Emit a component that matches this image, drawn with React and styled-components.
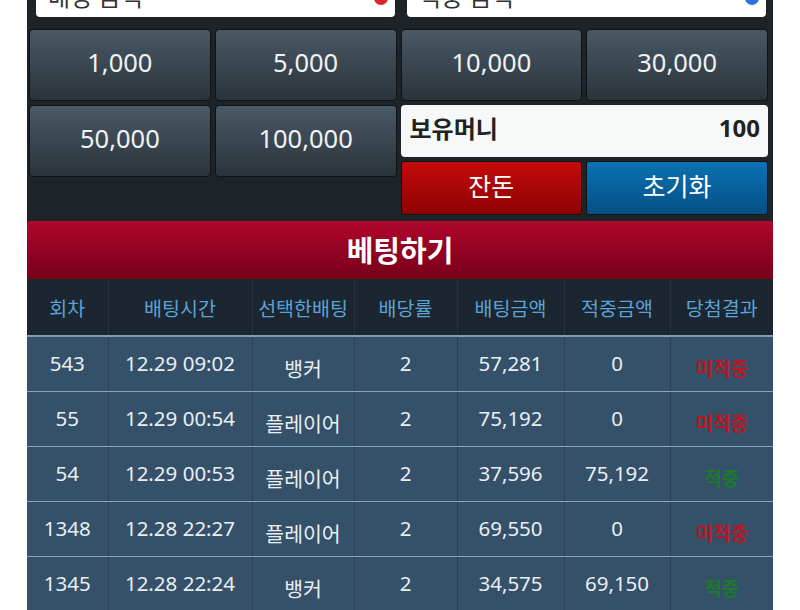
import React from 'react'
import styled, { createGlobalStyle } from 'styled-components'

const GlobalStyle = createGlobalStyle`
    html, body {
        margin: 0;
        padding: 0;
        background: #ffffff;
        overflow: hidden;
    }
    body {
        font-family: "Noto Sans", "Noto Sans CJK KR", sans-serif;
    }
`

const Panel = styled.div`
    width: 746px;
    margin-left: 27px;
    background-color: #1d2327;
`

const InputRow = styled.div`
    display: grid;
    grid-template-columns: 1fr 1fr;
    column-gap: 12px;
    padding: 0 7px 0 9px;
    margin-top: -27px;
`

const InputBox = styled.div`
    position: relative;
    height: 44px;
    background-color: #ffffff;
    border-radius: 4px;
    display: flex;
    align-items: center;
    padding-left: 12px;
    font-size: 24px;
    color: #333;
`

const Dot = styled.span`
    position: absolute;
    right: 7px;
    top: 18px;
    width: 14px;
    height: 14px;
    border-radius: 50%;
    background-color: ${p => p.$color};
`

const Grid = styled.div`
    display: grid;
    grid-template-columns: repeat(4, 1fr);
    gap: 4px;
    padding: 12px 5px 6px 2px;
`

const AmountButton = styled.div`
    height: 72px;
    box-sizing: border-box;
    border: 1px solid #0f1316;
    border-radius: 4px;
    background: linear-gradient(#4a5966, #2a333a);
    color: #eef2f4;
    font-size: 25.5px;
    display: flex;
    align-items: center;
    justify-content: center;
    padding-bottom: 7px;
`

const MoneyBlock = styled.div`
    grid-column: 3 / span 2;
    display: grid;
    grid-template-columns: 1fr 1fr;
    gap: 4px;
`

const MoneyBox = styled.div`
    grid-column: 1 / span 2;
    height: 52px;
    box-sizing: border-box;
    background-color: #f7f8f8;
    border-radius: 4px;
    display: flex;
    align-items: center;
    justify-content: space-between;
    padding: 0 8px 8px 9px;
    font-size: 24px;
    font-weight: 700;
    color: #222;
`

const ActionButton = styled.div`
    height: 54px;
    box-sizing: border-box;
    border: 1px solid #0f1316;
    border-radius: 3px;
    background: ${p => p.$red
        ? 'linear-gradient(#c50a0a, #8e0202)'
        : 'linear-gradient(#0a72b4, #054f83)'};
    color: #ffffff;
    font-size: 25px;
    display: flex;
    align-items: center;
    justify-content: center;
    padding-bottom: 6px;
`

const Banner = styled.div`
    height: 58px;
    border-radius: 3px 3px 0 0;
    background: linear-gradient(#b0062c, #76001a);
    color: #ffffff;
    font-size: 29px;
    font-weight: 700;
    display: flex;
    align-items: center;
    justify-content: center;
    padding-bottom: 2px;
    box-sizing: border-box;
`

const Table = styled.table`
    width: 746px;
    border-collapse: collapse;
    table-layout: fixed;
`

const HeadCell = styled.th`
    height: 56px;
    padding: 0;
    background-color: #1b2630;
    color: #5ba2d6;
    font-size: 19.5px;
    font-weight: 400;
    border-left: 1px solid #26323c;
    border-bottom: 2px solid #7f9db2;
    &:first-child { border-left: none; }
`

const Cell = styled.td`
    height: 55px;
    padding: ${p => p.$kor ? '8px 0 0' : '0 0 2px'};
    box-sizing: border-box;
    background-color: #35516a;
    color: ${p => p.$color || '#e9eef2'};
    font-size: ${p => p.$small ? '19px' : '20.5px'};
    font-weight: ${p => p.$small ? 700 : 400};
    text-align: center;
    border-left: 1px solid #2a4257;
    border-bottom: 1px solid #86a3b8;
    &:first-child { border-left: none; }
`

const amounts = ['1,000', '5,000', '10,000', '30,000']
const amounts2 = ['50,000', '100,000']

const widths = [81, 144, 102, 103, 107, 106, 103]
const headers = ['회차', '배팅시간', '선택한배팅', '배당률', '배팅금액', '적중금액', '당첨결과']

const rows = [
    ['543', '12.29 09:02', '뱅커', '2', '57,281', '0', false],
    ['55', '12.29 00:54', '플레이어', '2', '75,192', '0', false],
    ['54', '12.29 00:53', '플레이어', '2', '37,596', '75,192', true],
    ['1348', '12.28 22:27', '플레이어', '2', '69,550', '0', false],
    ['1345', '12.28 22:24', '뱅커', '2', '34,575', '69,150', true],
]

export default function App() {
    return (
        <Panel>
            <GlobalStyle />
            <InputRow>
                <InputBox>배팅 금액<Dot $color="#e0262b" /></InputBox>
                <InputBox>적중 금액<Dot $color="#2a73d9" /></InputBox>
            </InputRow>
            <Grid>
                {amounts.map(a => <AmountButton key={a}>{a}</AmountButton>)}
                {amounts2.map(a => <AmountButton key={a}>{a}</AmountButton>)}
                <MoneyBlock>
                    <MoneyBox><span>보유머니</span><span>100</span></MoneyBox>
                    <ActionButton $red>잔돈</ActionButton>
                    <ActionButton>초기화</ActionButton>
                </MoneyBlock>
            </Grid>
            <Banner>베팅하기</Banner>
            <Table>
                <colgroup>
                    {widths.map((w, i) => <col key={i} style={{ width: w }} />)}
                </colgroup>
                <thead>
                    <tr>{headers.map(h => <HeadCell key={h}>{h}</HeadCell>)}</tr>
                </thead>
                <tbody>
                    {rows.map((r, i) => (
                        <tr key={i}>
                            <Cell>{r[0]}</Cell>
                            <Cell>{r[1]}</Cell>
                            <Cell $kor>{r[2]}</Cell>
                            <Cell>{r[3]}</Cell>
                            <Cell>{r[4]}</Cell>
                            <Cell>{r[5]}</Cell>
                            <Cell $kor $small $color={r[6] ? '#1c7a2c' : '#bd1520'}>
                                {r[6] ? '적중' : '미적중'}
                            </Cell>
                        </tr>
                    ))}
                </tbody>
            </Table>
        </Panel>
    )
}
